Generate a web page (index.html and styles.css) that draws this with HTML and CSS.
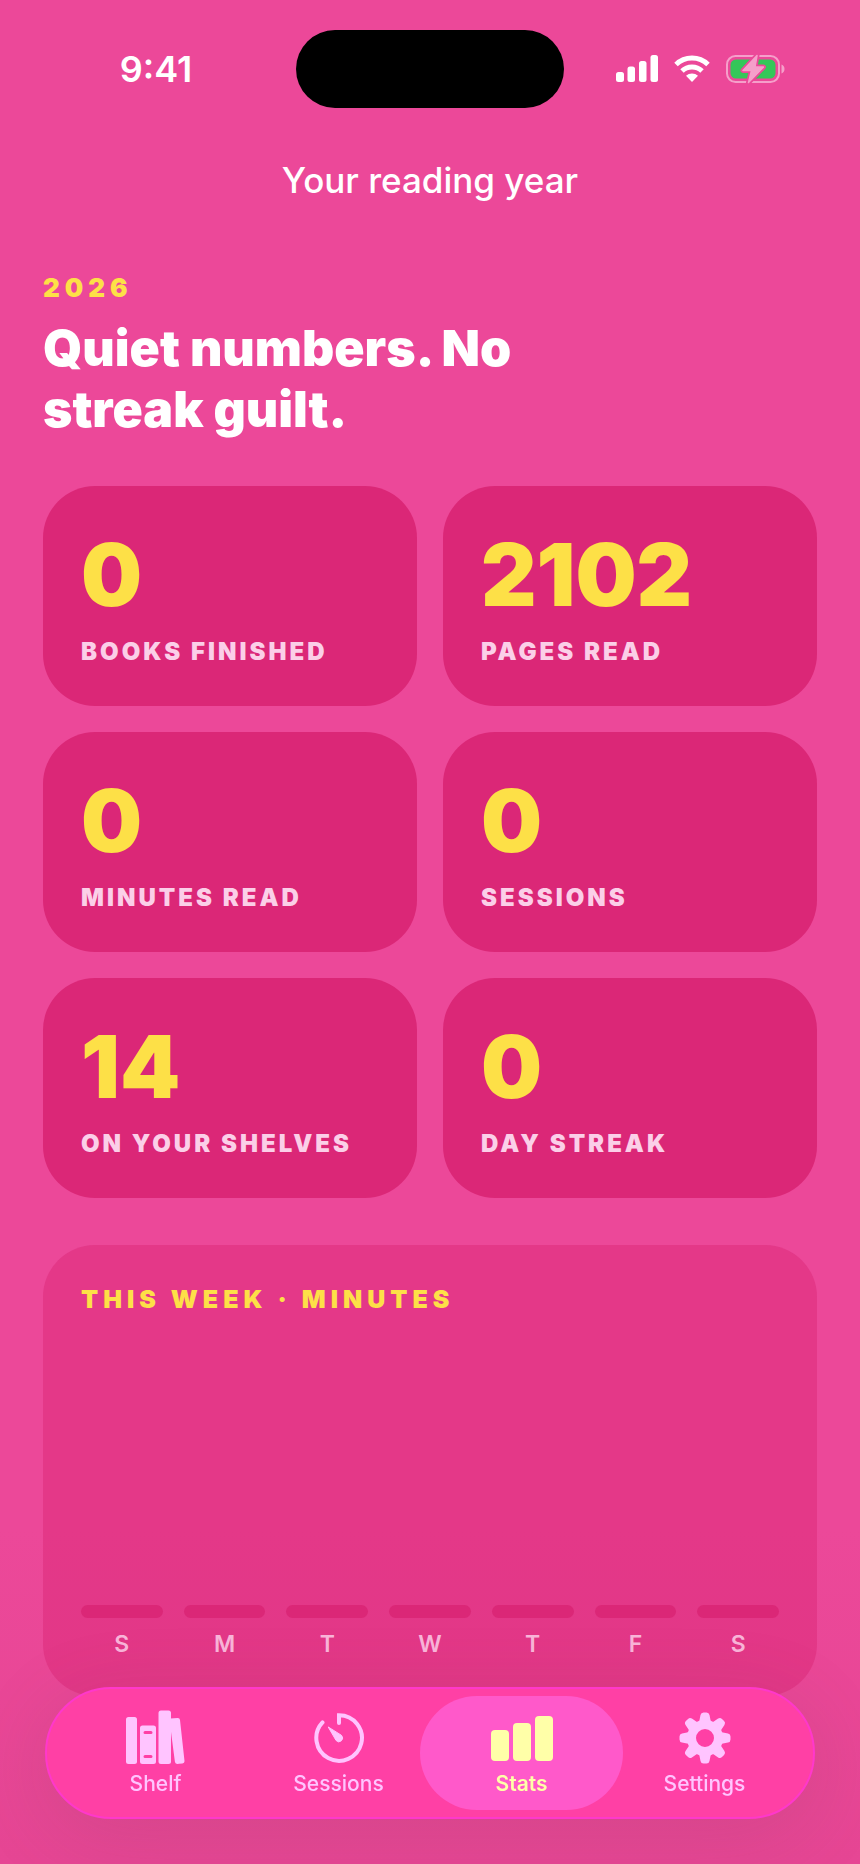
FILE: index.html
```
<!DOCTYPE html>
<html lang="en">

<head>
  <meta charset="UTF-8" />
  <meta name="viewport" content="width=device-width, initial-scale=1.0" />
  <title>Your reading year</title>

  <link rel="stylesheet" href="styles.css">
</head>

<body>

  <!-- Status bar -->
  <div class="status-bar">
    <time class="clock">9:41</time>
    <div class="island"></div>
    <div class="status-icons">
      <svg width="42" height="28" viewBox="0 0 42 28" fill="#fff" aria-hidden="true">
        <rect x="0" y="17" width="8" height="10" rx="2.5" />
        <rect x="11.5" y="11.5" width="7.5" height="15.5" rx="2.5" />
        <rect x="23" y="6" width="7.5" height="21" rx="2.5" />
        <rect x="34.5" y="0" width="7.5" height="27" rx="2.5" />
      </svg>
      <svg width="36" height="28" viewBox="0 0 36 28" fill="none" stroke="#fff" stroke-width="5" aria-hidden="true">
        <path d="M2 9.5a23 23 0 0 1 32 0" />
        <path d="M8 16a14.5 14.5 0 0 1 20 0" />
        <path d="M18 27l-6-6.2a9 9 0 0 1 12 0z" fill="#fff" stroke="none" />
      </svg>
      <svg width="59" height="30" viewBox="0 0 59 30" aria-hidden="true">
        <rect x="1" y="2" width="52" height="26" rx="8.5" fill="none" stroke="#f59fca" stroke-width="2" />
        <path d="M55.500 10.500c4 1.500 4 7.500 0 9z" fill="#f59fca" />
        <rect x="4.500" y="5.500" width="45" height="19" rx="5.500" fill="#34c759" />
        <path d="M31 1.500L17 16.500h8.500L22.500 28.500 37.500 13H29z" fill="#f59fca" stroke="#ec4899" stroke-width="5" stroke-linejoin="round" paint-order="stroke" />
        <path d="M31 1.500L17 16.500h8.500L22.500 28.500 37.500 13H29z" fill="#f59fca" stroke="#f59fca" stroke-width="1.500" stroke-linejoin="round" />
      </svg>
    </div>
  </div>

  <header class="nav-title">Your reading year</header>

  <main class="content">
    <p class="eyebrow">2026</p>
    <h1 class="headline">Quiet numbers. No streak guilt.</h1>

    <section class="stats-grid">
      <div class="stat-card">
        <p class="stat-value">0</p>
        <p class="stat-label">BOOKS FINISHED</p>
      </div>
      <div class="stat-card">
        <p class="stat-value">2102</p>
        <p class="stat-label">PAGES READ</p>
      </div>
      <div class="stat-card">
        <p class="stat-value">0</p>
        <p class="stat-label">MINUTES READ</p>
      </div>
      <div class="stat-card">
        <p class="stat-value">0</p>
        <p class="stat-label">SESSIONS</p>
      </div>
      <div class="stat-card">
        <p class="stat-value">14</p>
        <p class="stat-label">ON YOUR SHELVES</p>
      </div>
      <div class="stat-card">
        <p class="stat-value">0</p>
        <p class="stat-label">DAY STREAK</p>
      </div>
    </section>

    <section class="week-card">
      <h2 class="week-title">THIS WEEK · MINUTES</h2>
      <div class="week-chart">
        <div class="day"><div class="bar"></div><span>S</span></div>
        <div class="day"><div class="bar"></div><span>M</span></div>
        <div class="day"><div class="bar"></div><span>T</span></div>
        <div class="day"><div class="bar"></div><span>W</span></div>
        <div class="day"><div class="bar"></div><span>T</span></div>
        <div class="day"><div class="bar"></div><span>F</span></div>
        <div class="day"><div class="bar"></div><span>S</span></div>
      </div>
    </section>
  </main>

  <!-- Tab bar -->
  <nav class="tab-bar">
    <a href="#shelf" class="tab">
      <svg width="60" height="56" viewBox="0 0 60 56" fill="currentColor" aria-hidden="true">
        <rect x="0" y="8" width="11" height="47" rx="2.500" />
        <path fill-rule="evenodd" d="M16.500 16.500h11a2.500 2.500 0 0 1 2.500 2.500v33.500a2.500 2.500 0 0 1-2.500 2.500h-11a2.500 2.500 0 0 1-2.500-2.500V19a2.500 2.500 0 0 1 2.500-2.500zM19 22a1.400 1.400 0 0 0 0 3h6a1.400 1.400 0 0 0 0-3zM19 46a1.400 1.400 0 0 0 0 3h6a1.400 1.400 0 0 0 0-3z" />
        <rect x="32.500" y="1.500" width="12.500" height="53.500" rx="2.500" />
        <path d="M44.500 9.500l7-.6q2.300-.2 2.500 2.100l4.500 41q.2 2.300-2.100 2.500l-5 .4q-2.300.2-2.500-2.100L44.500 19z" />
      </svg>
      <span>Shelf</span>
    </a>
    <a href="#sessions" class="tab">
      <svg width="60" height="56" viewBox="0 0 60 56" fill="none" stroke="currentColor" stroke-width="4" stroke-linecap="round" stroke-linejoin="miter" aria-hidden="true">
        <path d="M30 14V6.200a22.800 22.800 0 1 1-16.500 7.200" />
        <path d="M19.400 18.300l7.700 13.200a3.700 3.700 0 1 0 5.500-5z" fill="currentColor" stroke-width="1" stroke-linejoin="round" />
      </svg>
      <span>Sessions</span>
    </a>
    <a href="#stats" class="tab active" aria-current="page">
      <svg width="64" height="56" viewBox="0 0 64 56" fill="currentColor" aria-hidden="true">
        <rect x="1" y="21" width="18" height="31" rx="4" />
        <rect x="23" y="14" width="18" height="38" rx="4" />
        <rect x="45" y="7" width="18" height="45" rx="4" />
      </svg>
      <span>Stats</span>
    </a>
    <a href="#settings" class="tab">
      <svg width="60" height="56" viewBox="0 0 60 56" aria-hidden="true">
        <defs>
          <path id="tooth" d="M22.500 15q1.500-1.500 2-4l1-5q.5-2.500 3-2.500h3q2.500 0 3 2.500l1 5q.5 2.500 2 4z" />
        </defs>
        <g fill="currentColor">
          <use href="#tooth" />
          <use href="#tooth" transform="rotate(45 30 29)" />
          <use href="#tooth" transform="rotate(90 30 29)" />
          <use href="#tooth" transform="rotate(135 30 29)" />
          <use href="#tooth" transform="rotate(180 30 29)" />
          <use href="#tooth" transform="rotate(225 30 29)" />
          <use href="#tooth" transform="rotate(270 30 29)" />
          <use href="#tooth" transform="rotate(315 30 29)" />
        </g>
        <circle cx="30" cy="29" r="13.500" fill="none" stroke="currentColor" stroke-width="9" />
      </svg>
      <span>Settings</span>
    </a>
  </nav>

</body>

</html>
```
FILE: styles.css
```
* {
  box-sizing: border-box;
  margin: 0;
  padding: 0;
}

body {
  min-height: 100vh;
  background: linear-gradient(#ec4899 82%, #e64694 100%);
  color: #fff;
  font-family: Inter, "Liberation Sans", sans-serif;
}

.status-bar {
  display: grid;
  grid-template-columns: 1fr 268px 1fr;
  align-items: center;
  padding-top: 30px;
}

.clock {
  padding-left: 16px;
  text-align: center;
  font-size: 36px;
  line-height: 44px;
  font-weight: 600;
}

.island {
  height: 78px;
  border-radius: 40px;
  background: #000;
}

.status-icons {
  display: flex;
  align-items: center;
  justify-content: center;
  gap: 16px;
  padding-right: 24px;
}

.nav-title {
  padding: 50px 0 64px;
  text-align: center;
  font-size: 35px;
  line-height: 44px;
  font-weight: 500;
}

.content {
  padding: 0 43px 168px;
}

.eyebrow {
  color: #fde047;
  font-size: 26px;
  line-height: 44px;
  font-weight: 900;
  letter-spacing: 5px;
}

.headline {
  max-width: 560px;
  margin-top: 8px;
  font-size: 50px;
  line-height: 61px;
  font-weight: 900;
}

.stats-grid {
  display: grid;
  grid-template-columns: 1fr 1fr;
  gap: 26px;
  margin-top: 46px;
}

.stat-card {
  padding: 38px;
  border-radius: 52px;
  background: #db2777;
}

.stat-value {
  color: #fde047;
  font-size: 86px;
  line-height: 102px;
  font-weight: 900;
}

.stat-label {
  margin-top: 10px;
  color: #fbcfe8;
  font-size: 24px;
  line-height: 32px;
  font-weight: 900;
  letter-spacing: 3px;
}

.week-card {
  margin-top: 47px;
  padding: 38px;
  border-radius: 52px;
  background: rgba(219, 39, 119, 0.5);
}

.week-title {
  color: #fde047;
  font-size: 25px;
  line-height: 32px;
  font-weight: 900;
  letter-spacing: 5px;
}

.week-chart {
  display: grid;
  grid-template-columns: repeat(7, 1fr);
  gap: 21px;
  height: 343px;
}

.day {
  display: flex;
  flex-direction: column;
  justify-content: flex-end;
  gap: 12px;
  text-align: center;
  color: #f9b5d9;
  font-size: 23px;
  line-height: 28px;
  font-weight: 600;
}

.bar {
  height: 13px;
  border-radius: 7px;
  background: #db2777;
}

.tab-bar {
  position: fixed;
  right: 45px;
  bottom: 45px;
  left: 45px;
  display: flex;
  padding: 7px;
  border: 2px solid #ff38cb;
  border-radius: 66px;
  background: #ff40a5;
  box-shadow: 0 16px 80px rgba(110, 70, 90, 0.16);
}

.tab {
  display: flex;
  flex: 1;
  flex-direction: column;
  align-items: center;
  gap: 5px;
  padding: 13px 0 12px;
  border-radius: 58px;
  color: #ffc4ff;
  font-size: 21px;
  line-height: 28px;
  font-weight: 500;
  text-decoration: none;
}

.tab + .tab {
  margin-left: -20px;
}

.tab.active {
  background: #ff59ca;
  color: #ffffa8;
  font-weight: 600;
}
```
